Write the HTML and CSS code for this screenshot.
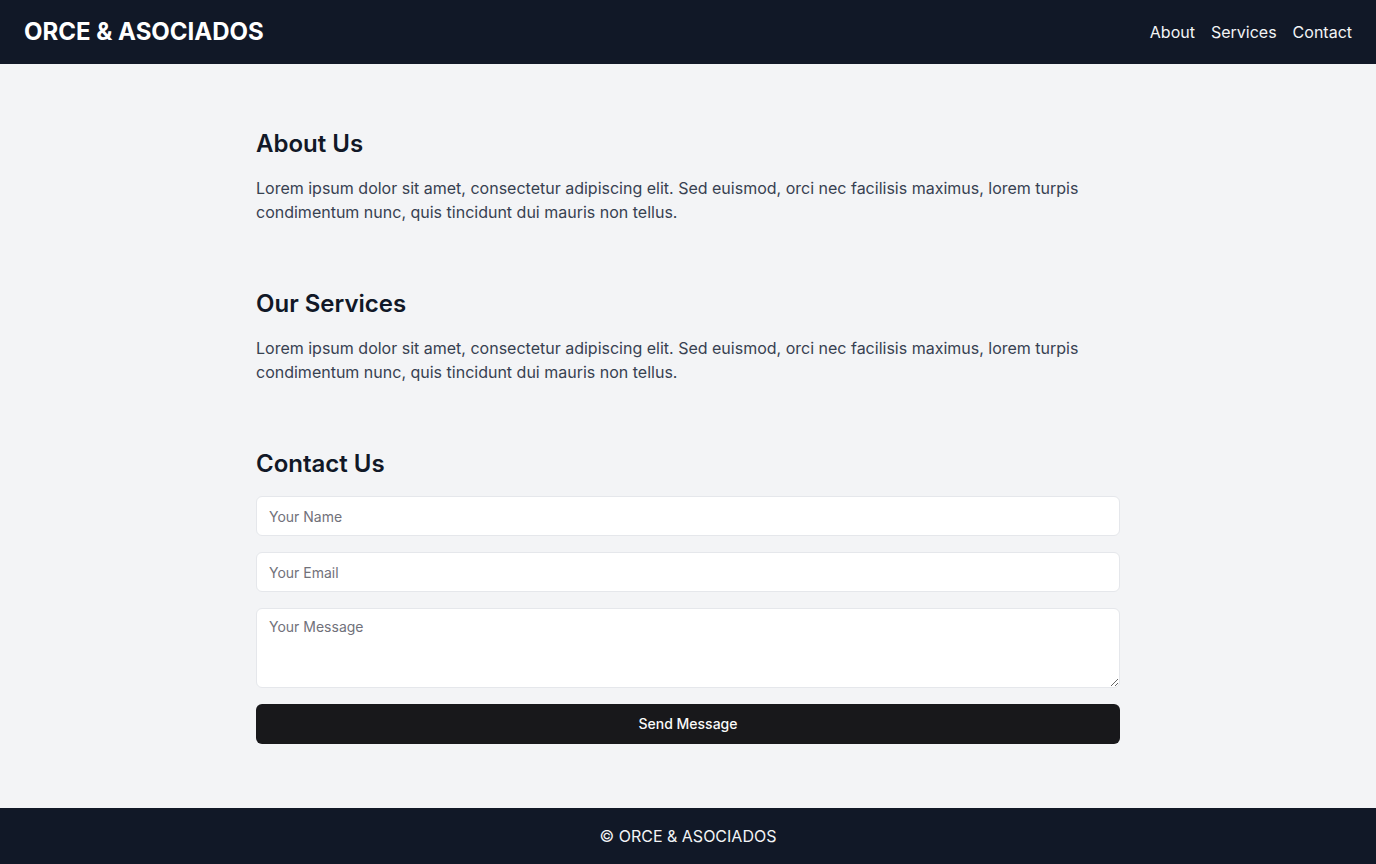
FILE: index.html
```html
<!DOCTYPE html>
<html lang="es">
<head>
<meta charset="utf-8">
<title>ORCE &amp; ASOCIADOS</title>
<link rel="stylesheet" href="styles.css">
</head>
<body>
<header class="topbar">
  <div class="logo">ORCE &amp; ASOCIADOS</div>
  <nav class="nav">
    <a href="#about">About</a>
    <a href="#services">Services</a>
    <a href="#contact">Contact</a>
  </nav>
</header>
<main class="main">
  <section class="section" id="about">
    <h2>About Us</h2>
    <p>Lorem ipsum dolor sit amet, consectetur adipiscing elit. Sed euismod, orci nec facilisis maximus, lorem turpis condimentum nunc, quis tincidunt dui mauris non tellus.</p>
  </section>
  <section class="section" id="services">
    <h2>Our Services</h2>
    <p>Lorem ipsum dolor sit amet, consectetur adipiscing elit. Sed euismod, orci nec facilisis maximus, lorem turpis condimentum nunc, quis tincidunt dui mauris non tellus.</p>
  </section>
  <section class="section" id="contact">
    <h2>Contact Us</h2>
    <form class="form">
      <input class="field" type="text" placeholder="Your Name">
      <input class="field" type="email" placeholder="Your Email">
      <textarea class="field area" placeholder="Your Message"></textarea>
      <button class="send" type="button">Send Message</button>
    </form>
  </section>
</main>
<footer class="footer">© ORCE &amp; ASOCIADOS</footer>
</body>
</html>
```
FILE: styles.css
```css
* { box-sizing: border-box; }
html, body { margin: 0; padding: 0; }
body {
  font-family: Inter, "Noto Sans", sans-serif;
  background: #f3f4f6;
  color: #111827;
  min-height: 864px;
  display: flex;
  flex-direction: column;
}
.topbar {
  height: 64px;
  background: #111827;
  display: flex;
  align-items: center;
  justify-content: space-between;
  padding: 0 24px;
}
.logo {
  color: #ffffff;
  font-size: 24px;
  font-weight: 700;
  line-height: 32px;
}
.nav { display: flex; gap: 16px; }
.nav a {
  color: #f3f4f6;
  text-decoration: none;
  font-size: 16px;
  line-height: 24px;
}
.main {
  flex: 1;
  width: 864px;
  margin: 0 auto;
  padding: 32px 0;
}
.section { padding: 32px 0; }
.section h2 {
  margin: 0;
  font-size: 24px;
  line-height: 32px;
  font-weight: 600;
  color: #111827;
}
.section p {
  margin: 16px 0 0;
  font-size: 16px;
  line-height: 24px;
  color: #374151;
}
.form {
  margin-top: 16px;
  display: flex;
  flex-direction: column;
  gap: 16px;
}
.field {
  display: block;
  width: 100%;
  height: 40px;
  border: 1px solid #e5e7eb;
  border-radius: 6px;
  background: #ffffff;
  padding: 8px 12px;
  font-family: Inter, "Noto Sans", sans-serif;
  font-size: 14px;
  line-height: 20px;
  color: #111827;
  outline: none;
}
.field::placeholder { color: #71717a; }
.area {
  height: 80px;
  resize: vertical;
}
.send {
  height: 40px;
  width: 100%;
  border: none;
  border-radius: 6px;
  background: #18181b;
  color: #fafafa;
  font-family: Inter, sans-serif;
  font-size: 14px;
  line-height: 20px;
  font-weight: 500;
  padding: 0 16px 1px;
  cursor: pointer;
}
.footer {
  height: 56px;
  background: #111827;
  color: #f3f4f6;
  display: flex;
  align-items: center;
  justify-content: center;
  font-size: 16px;
  line-height: 24px;
}
```
